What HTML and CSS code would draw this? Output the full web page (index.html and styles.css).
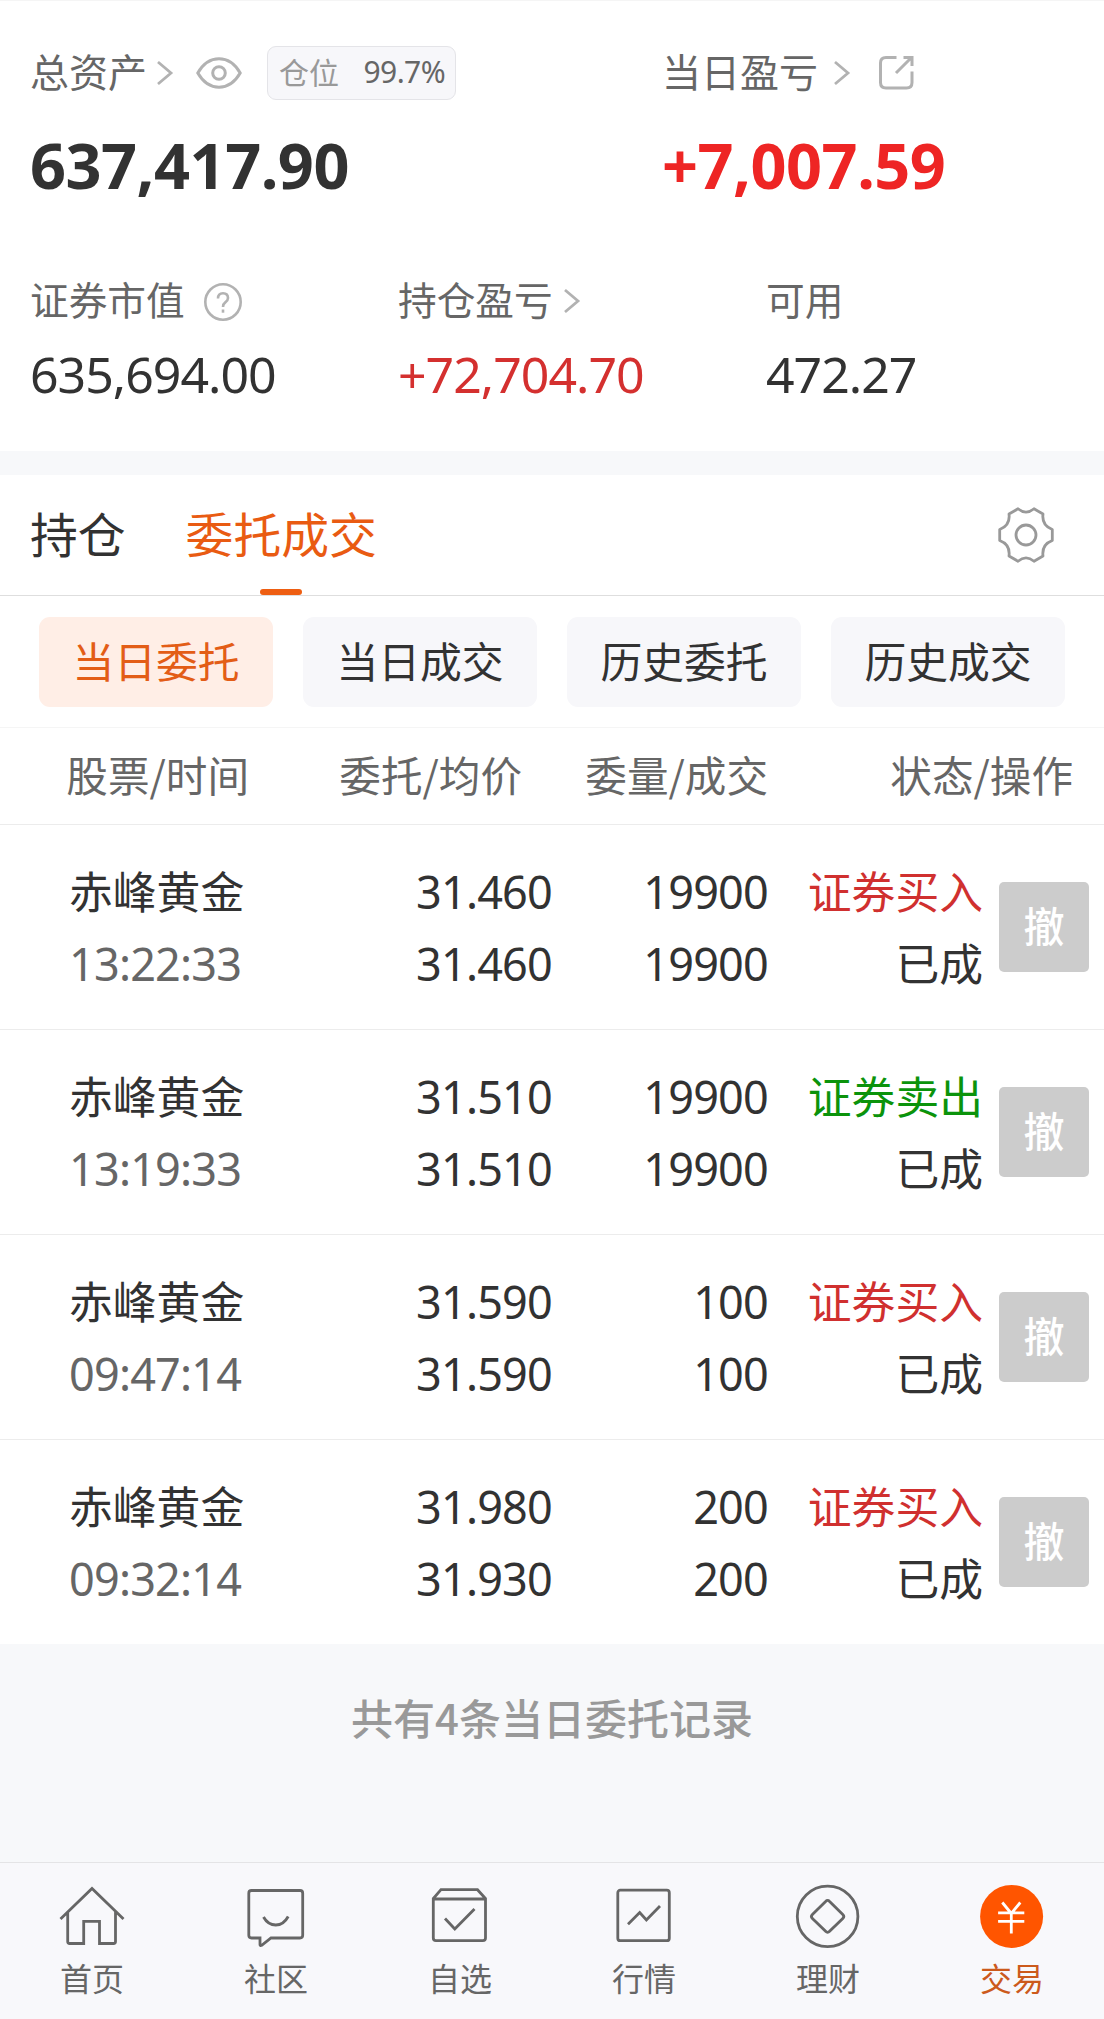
FILE: index.html
```html
<!DOCTYPE html>
<html lang="zh-CN">
<head>
<meta charset="utf-8">
<title>交易</title>
<link rel="stylesheet" href="styles.css">
</head>
<body>
<section class="summary">
  <div class="totals">
    <div class="total">
      <div class="label-row">
        <span class="label">总资产</span>
        <svg class="chevron chev-asset" viewBox="0 0 17 26"><path d="M2 2l13 11L2 24"/></svg>
        <svg class="eye" viewBox="0 0 46 32"><path d="M1.8 16C7 7 14 1.8 23 1.8S39 7 44.200 16C39 25 32 30.200 23 30.200S7 25 1.800 16z"/><circle cx="23" cy="16" r="6.300"/></svg>
        <span class="badge"><span class="badge-name">仓位</span><span class="badge-num">99.7%</span></span>
      </div>
      <div class="big">637,417.90</div>
    </div>
    <div class="total">
      <div class="label-row">
        <span class="label">当日盈亏</span>
        <svg class="chevron chev-day" viewBox="0 0 17 26"><path d="M2 2l13 11L2 24"/></svg>
        <svg class="share" viewBox="0 0 36 36"><path d="M18.500 2.500H8Q2.500 2.500 2.500 8v19.500Q2.500 33 8 33h20.500Q34 33 34 27.500V16.500M18 18L33 3M25.500 2.500H34V11"/></svg>
      </div>
      <div class="big gain">+7,007.59</div>
    </div>
  </div>
  <div class="details">
    <div>
      <div class="label-row small">
        <span class="label">证券市值</span>
        <svg class="help" viewBox="0 0 40 40"><circle cx="20" cy="20" r="17.700"/><path d="M15 16.500Q15 11.200 20 11.200T25 16Q25 18.500 22.300 20.400Q20 22 20 25"/><path d="M20 27.500v3.200"/></svg>
      </div>
      <div class="mid">635,694.00</div>
    </div>
    <div>
      <div class="label-row small">
        <span class="label">持仓盈亏</span>
        <svg class="chevron chev-hold" viewBox="0 0 17 26"><path d="M2 2l13 11L2 24"/></svg>
      </div>
      <div class="mid loss">+72,704.70</div>
    </div>
    <div>
      <div class="label-row small"><span class="label">可用</span></div>
      <div class="mid">472.27</div>
    </div>
  </div>
</section>

<nav class="tabs">
  <span class="tab">持仓</span>
  <span class="tab active">委托成交</span>
  <svg class="gear" viewBox="0 0 56 56"><path d="M20 1.800Q28 8.500 36 1.800L45 7Q43.500 18.500 54.300 22.500V33.500Q43.500 37.500 45 49L36 54.200Q28 47.500 20 54.200L11 49Q12.500 37.500 1.700 33.500V22.500Q12.500 18.500 11 7Z"/><circle cx="28" cy="28" r="10"/></svg>
</nav>

<div class="filters">
  <span class="pill on">当日委托</span>
  <span class="pill">当日成交</span>
  <span class="pill">历史委托</span>
  <span class="pill">历史成交</span>
</div>

<div class="grid head">
  <span class="h-stock">股票/时间</span><span>委托/均价</span><span>委量/成交</span><span class="h-state">状态/操作</span>
</div>

<div class="grid order">
  <div class="stock"><p>赤峰黄金</p><p class="num time">13:22:33</p></div>
  <div class="num"><p>31.460</p><p>31.460</p></div>
  <div class="num"><p>19900</p><p>19900</p></div>
  <div class="state"><p class="buy">证券买入</p><p>已成</p></div>
  <button class="cancel">撤</button>
</div>
<div class="grid order">
  <div class="stock"><p>赤峰黄金</p><p class="num time">13:19:33</p></div>
  <div class="num"><p>31.510</p><p>31.510</p></div>
  <div class="num"><p>19900</p><p>19900</p></div>
  <div class="state"><p class="sell">证券卖出</p><p>已成</p></div>
  <button class="cancel">撤</button>
</div>
<div class="grid order">
  <div class="stock"><p>赤峰黄金</p><p class="num time">09:47:14</p></div>
  <div class="num"><p>31.590</p><p>31.590</p></div>
  <div class="num"><p>100</p><p>100</p></div>
  <div class="state"><p class="buy">证券买入</p><p>已成</p></div>
  <button class="cancel">撤</button>
</div>
<div class="grid order last">
  <div class="stock"><p>赤峰黄金</p><p class="num time">09:32:14</p></div>
  <div class="num"><p>31.980</p><p>31.930</p></div>
  <div class="num"><p>200</p><p>200</p></div>
  <div class="state"><p class="buy">证券买入</p><p>已成</p></div>
  <button class="cancel">撤</button>
</div>

<div class="count">共有4条当日委托记录</div>

<nav class="bottom">
  <a class="item"><svg viewBox="0 0 64 64"><path d="M.5 34L32 3.500L63.500 34M7.700 27V56.500Q7.700 58.500 9.700 58.500H23.700V36.300H39.500V58.500H53.500Q55.500 58.500 55.500 56.500V27"/></svg>首页</a>
  <a class="item"><svg viewBox="0 0 64 64"><path d="M7.500 5.500H56Q58.700 5.500 58.700 8.200V50.300Q58.700 53 56 53H27L17.700 60.300Q16 61.200 16 59.500V53H7.500Q4.800 53 4.800 50.300V8.200Q4.800 5.500 7.500 5.500z"/><path d="M19.500 32Q24 40 31.800 40T44.200 31.500"/></svg>社区</a>
  <a class="item"><svg viewBox="0 0 64 64"><path d="M13 4.700H49.500L57.500 13.500V53Q57.500 55.700 54.800 55.700H8Q5.300 55.700 5.300 53V13.500zM5.300 14H57.500M17 33.500L26.800 44L46.500 24"/></svg>自选</a>
  <a class="item"><svg viewBox="0 0 64 64"><rect x="5.800" y="5.200" width="51.500" height="50.500" rx="2.500"/><path d="M16 39.300L27.700 27.500L34.400 35L48 21"/></svg>行情</a>
  <a class="item"><svg viewBox="0 0 64 64"><circle cx="31.600" cy="31.400" r="30.300"/><path d="M29.600 16.500Q31.600 14.400 33.600 16.500L46.800 29.400Q48.800 31.400 46.800 33.400L33.600 46.300Q31.600 48.400 29.600 46.300L16.400 33.400Q14.400 31.400 16.400 29.400z"/></svg>理财</a>
  <a class="item current"><svg viewBox="0 0 64 64"><circle class="disc" cx="31.600" cy="31.400" r="31.500"/><path class="yen" d="M22.300 17.500L31.300 28.500L40.300 17.500M31.300 28.500V48.500M18.100 27.800H44.300M18.100 36.400H44.300"/></svg>交易</a>
</nav>
</body>
</html>
```
FILE: styles.css
```css
* { box-sizing: border-box; }
body {
  margin: 0;
  width: 1104px;
  height: 2019px;
  display: flex;
  flex-direction: column;
  background: #f7f8fa;
  color: #323232;
  font-family: "Noto Sans CJK SC", sans-serif;
}
p { margin: 0; }
svg { fill: none; stroke: #b2b2b2; flex: none; overflow: visible; }

.summary {
  height: 451px;
  background: #fff;
  border-top: 1px solid #f5f5f5;
  padding: 45px 0 0 30px;
}
.totals { display: grid; grid-template-columns: 632px 1fr; height: 228px; }
.details { display: grid; grid-template-columns: 368px 368px 1fr; }
.label-row {
  display: flex;
  align-items: center;
  height: 54px;
  font-size: 39px;
  color: #666;
}
.label { line-height: 46px; padding-bottom: 7px; }
.small { font-size: 38.7px; }
.small .label { padding-bottom: 6px; }
.chevron { width: 17px; height: 26px; stroke-width: 2.8; }
.chev-asset { margin-left: 9px; }
.chev-day { margin-left: 15px; }
.chev-hold { margin-left: 10px; }
.eye { width: 46px; height: 32px; margin-left: 23px; stroke-width: 3; }
.badge {
  display: flex;
  align-items: center;
  justify-content: space-between;
  width: 189px;
  height: 54px;
  margin-left: 25px;
  padding: 0 10px 0 11px;
  border: 1px solid #e4e4e8;
  border-radius: 9px;
  background: #f7f7fa;
  font-size: 30px;
  line-height: 40px;
}
.badge-name { color: #999; padding-bottom: 5px; }
.badge-num { font-family: "Noto Sans", sans-serif; letter-spacing: -.6px; padding-bottom: 3px; }
.share { width: 36px; height: 36px; margin-left: 28px; stroke-width: 3; }
.help { width: 40px; height: 40px; margin: 2px 0 0 18px; stroke-width: 2.6; }
.big {
  margin-top: 25px;
  font: 700 63px/80px "Noto Sans", sans-serif;
  letter-spacing: -.5px;
}
.gain { color: #ee2524; }
.mid {
  margin-top: 4px;
  font: 400 50px/84px "Noto Sans", sans-serif;
  letter-spacing: -1px;
}
.loss { color: #d4302f; }

.tabs {
  display: flex;
  align-items: center;
  gap: 60px;
  height: 121px;
  margin-top: 24px;
  padding: 0 50px 0 30px;
  background: #fff;
  border-bottom: 1px solid #dedede;
  font-size: 47.8px;
}
.tab { height: 120px; line-height: 116px; }
.active { position: relative; color: #e95b12; }
.active::after {
  content: "";
  position: absolute;
  left: 50%;
  bottom: 0;
  width: 42px;
  height: 6px;
  margin-left: -21px;
  border-radius: 3px;
  background: #ee5e12;
}
.gear { width: 56px; height: 56px; margin-left: auto; stroke: #999; stroke-width: 2.8; stroke-linejoin: round; }

.filters {
  display: flex;
  gap: 30px;
  height: 132px;
  padding: 21px 0 0 39px;
  background: #fff;
  border-bottom: 1px solid #f5f5f5;
}
.pill {
  width: 234px;
  height: 90px;
  border-radius: 11px;
  background: #f7f7fa;
  font-size: 41.800px;
  line-height: 87px;
  text-align: center;
}
.on { background: #ffeee6; color: #e35d16; }

.grid {
  display: grid;
  background: #fff;
  border-bottom: 1px solid #ececec;
  text-align: right;
}
.head {
  grid-template-columns: 249px 273px 246px 305px;
  height: 97px;
  font-size: 41.600px;
  line-height: 93px;
  color: #666;
}
.order {
  grid-template-columns: 249px 303px 216px 215px 90px;
  height: 205px;
  padding-top: 32px;
  font-size: 43.800px;
  line-height: 72px;
}
.last { height: 204px; border-bottom: 0; }
.stock { padding-left: 69px; text-align: left; }
.stock p:first-child { margin-top: -3px; padding-bottom: 2px; }
.state { margin-top: -3px; }
.num { margin-top: -1px; font-family: "Noto Sans", sans-serif; font-size: 45px; letter-spacing: -.8px; }
.stock .num { margin-top: 0; }
.time { color: #666; }
.buy { color: #d0302f; }
.sell { color: #0b930b; }
.cancel {
  width: 90px;
  height: 90px;
  margin: 25px 0 0 16px;
  padding: 0 0 5px;
  border: 0;
  border-radius: 5px;
  background: #ccc;
  color: #fff;
  font: 500 41px/85px "Noto Sans CJK SC", sans-serif;
}

.count {
  flex: 1;
  padding-top: 43px;
  font-size: 42px;
  font-weight: 500;
  line-height: 60px;
  text-align: center;
  color: #999;
}
.bottom {
  display: grid;
  grid-template-columns: repeat(6, 184px);
  height: 157px;
  border-top: 1px solid #e4e4e6;
  background: #f8f8fb;
}
.item {
  display: flex;
  flex-direction: column;
  align-items: center;
  padding-top: 22px;
  font-size: 32px;
  line-height: 56px;
  color: #666;
}
.item svg { width: 64px; height: 64px; stroke: #666; stroke-width: 2.8; }
.current { color: #cc5a1c; }
.item .disc { fill: #f50; stroke: none; }
.item .yen { stroke: #fff; }
```
